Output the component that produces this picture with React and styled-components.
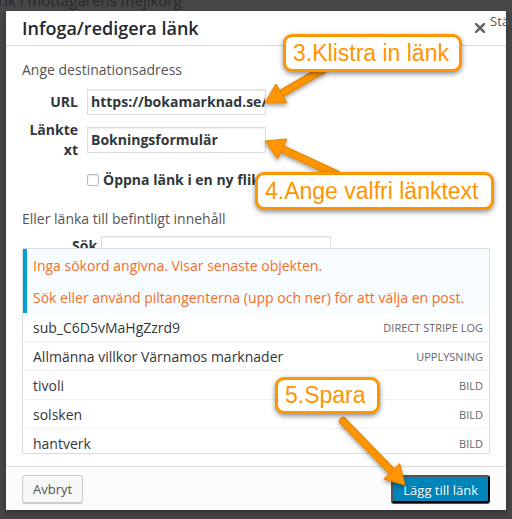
import React from 'react'
import styled, { createGlobalStyle } from 'styled-components'

const ORANGE = '#ff9500'

const GlobalStyle = createGlobalStyle`
  html, body { margin: 0; padding: 0; }
  body { background: #464646; font-family: 'Open Sans', 'DejaVu Sans', sans-serif; }
  * { box-sizing: border-box; }
`

const Page = styled.div`
  position: relative;
  width: 512px;
  height: 519px;
  overflow: hidden;
  background: #464646;
`

const BackdropLine = styled.div`
  margin: -10px 0 0 -2px;
  font-size: 15px;
  line-height: 20px;
  color: #262626;
  white-space: nowrap;
`

const Modal = styled.div`
  position: absolute;
  left: 6px;
  top: 11px;
  width: 500px;
  height: 499px;
  background: #fff;
  display: flex;
  flex-direction: column;
  box-shadow: 0 3px 6px rgba(0, 0, 0, 0.3);
`

const Header = styled.div`
  height: 35px;
  flex: none;
  display: flex;
  align-items: center;
  justify-content: space-between;
  padding: 0 21px 0 16px;
  border-bottom: 1px solid #ddd;
`

const Title = styled.h1`
  margin: 0;
  font-size: 18px;
  font-weight: 600;
  line-height: 24px;
  color: #23282d;
`

const Body = styled.div`
  flex: 1;
  display: flex;
  flex-direction: column;
  padding: 0 16px;
`

const Hint = styled.p`
  margin: ${p => p.$top}px 0 0;
  font-size: 14px;
  line-height: 20px;
  color: #555;
`

const Fields = styled.div`
  margin-top: 9px;
  display: flex;
  flex-direction: column;
  gap: 5px;
`

const FieldRow = styled.div`
  display: flex;
  align-items: center;
`

const Label = styled.label`
  width: 56px;
  margin-right: 9px;
  text-align: right;
  font-size: 14px;
  font-weight: 700;
  line-height: 20px;
  color: #32373c;
`

const TextInput = styled.div`
  width: ${p => p.$w}px;
  height: 26px;
  padding: 0 3px;
  border: 1px solid #ddd;
  box-shadow: inset 0 1px 2px rgba(0, 0, 0, 0.07);
  background: #fff;
  font-size: 14px;
  font-weight: 700;
  line-height: 24px;
  color: #32373c;
  white-space: nowrap;
  overflow: hidden;
`

const CheckRow = styled.label`
  margin-top: 10px;
  padding-left: 65px;
  display: flex;
  align-items: center;
  gap: 4px;
  font-size: 14px;
  font-weight: 700;
  line-height: 20px;
  color: #32373c;
`

const Check = styled.span`
  width: 12px;
  height: 12px;
  border: 1px solid #b4b9be;
  border-radius: 2px;
  background: #fff;
  box-shadow: inset 0 1px 2px rgba(0, 0, 0, 0.1);
`

const SearchClip = styled.div`
  margin-top: 7px;
  height: 12px;
  overflow: hidden;
  display: flex;
  align-items: flex-start;
`

const SearchLabel = styled.label`
  margin-left: 50px;
  width: 18px;
  font-size: 14px;
  font-weight: 700;
  line-height: 20px;
  color: #32373c;
  margin-right: 11px;
`

const Results = styled.div`
  height: 206px;
  border: 1px solid #ddd;
  background: #fff;
  overflow: hidden;
`

const Notice = styled.div`
  border-left: 4px solid #00a0d2;
  background: #f7fcfe;
  padding: 8px 10px 6px 6px;
  display: flex;
  flex-direction: column;
  gap: 14px;
  font-size: 14px;
  line-height: 18px;
  color: #f56e28;

  p { margin: 0; }
`

const Item = styled.div`
  height: 29px;
  flex: none;
  display: flex;
  align-items: center;
  justify-content: space-between;
  padding: 0 6px 0 10px;
  border-bottom: 1px solid #f1f1f1;
  font-size: 14px;
  color: #32373c;
`

const ItemType = styled.span`
  font-size: 11px;
  text-transform: uppercase;
  color: #666;
`

const Footer = styled.div`
  margin-top: auto;
  height: 44px;
  flex: none;
  display: flex;
  align-items: flex-start;
  justify-content: space-between;
  padding: 8px 16px 0;
  border-top: 1px solid #ddd;
  background: #fcfcfc;
`

const Button = styled.button`
  height: 28px;
  padding: 0 10px;
  border-radius: 3px;
  font-family: inherit;
  font-size: 13px;
  line-height: 26px;
  border: 1px solid ${p => (p.$primary ? '#0073aa #006799 #006799' : '#ccc')};
  background: ${p => (p.$primary ? '#0085ba' : '#f7f7f7')};
  color: ${p => (p.$primary ? '#fff' : '#555')};
  box-shadow: 0 1px 0 ${p => (p.$primary ? '#006799' : '#ccc')};
  text-shadow: ${p => (p.$primary ? '0 -1px 1px #006799' : 'none')};
`

const Overlay = styled.svg`
  position: absolute;
  inset: 0;
  pointer-events: none;
`

const Callout = styled.div`
  position: absolute;
  left: ${p => p.$x}px;
  top: ${p => p.$y}px;
  width: ${p => p.$w}px;
  height: ${p => p.$h}px;
  display: flex;
  align-items: center;
  padding: 0 7px;
  border: 3px solid ${ORANGE};
  border-radius: 9px;
  background: #fff;
  box-shadow: 0 2px 5px rgba(0, 0, 0, 0.45);
  font-family: 'Liberation Sans', Arial, sans-serif;
  font-size: 23px;
  color: ${ORANGE};
  white-space: nowrap;
`

const StrayText = styled.span`
  position: absolute;
  left: 490px;
  top: 12px;
  font-size: 13px;
  color: #555;
`

const items = [
  ['sub_C6D5vMaHgZzrd9', 'Direct Stripe Log'],
  ['Allmänna villkor Värnamos marknader', 'Upplysning'],
  ['tivoli', 'Bild'],
  ['solsken', 'Bild'],
  ['hantverk', 'Bild'],
]

const arrows = [
  [[322, 70], [265, 103]],
  [[336, 174], [265, 141]],
  [[343, 421], [405, 485]],
]

function Arrow({ from, to }) {
  const dx = to[0] - from[0]
  const dy = to[1] - from[1]
  const len = Math.hypot(dx, dy)
  const ux = dx / len
  const uy = dy / len
  const bx = to[0] - ux * 19
  const by = to[1] - uy * 19
  const nx = -uy * 11
  const ny = ux * 11
  const head = `${to[0]},${to[1]} ${bx + nx},${by + ny} ${bx - nx},${by - ny}`
  return (
    <g filter="url(#shadow)">
      <line x1={from[0]} y1={from[1]} x2={bx + ux * 2} y2={by + uy * 2} stroke="#e08300" strokeWidth="8" strokeLinecap="round" />
      <line x1={from[0]} y1={from[1]} x2={bx + ux * 2} y2={by + uy * 2} stroke={ORANGE} strokeWidth="6" strokeLinecap="round" />
      <polygon points={head} fill={ORANGE} stroke="#e08300" strokeWidth="1" strokeLinejoin="round" />
    </g>
  )
}

export default function App() {
  return (
    <Page>
      <GlobalStyle />
      <BackdropLine>rik i mottagarens mejlkorg</BackdropLine>
      <Modal>
        <Header>
          <Title>Infoga/redigera länk</Title>
          <svg width="10" height="10" viewBox="0 0 10 10">
            <path d="M1 1 L9 9 M9 1 L1 9" stroke="#666" strokeWidth="2.6" strokeLinecap="square" />
          </svg>
        </Header>
        <Body>
          <Hint $top={14}>Ange destinationsadress</Hint>
          <Fields>
            <FieldRow>
              <Label>URL</Label>
              <TextInput $w={179}>https://bokamarknad.se/</TextInput>
            </FieldRow>
            <FieldRow>
              <Label>Länkte<wbr />xt</Label>
              <TextInput $w={179}>Bokningsformulär</TextInput>
            </FieldRow>
          </Fields>
          <CheckRow>
            <Check />
            Öppna länk i en ny flik
          </CheckRow>
          <Hint $top={19}>Eller länka till befintligt innehåll</Hint>
          <SearchClip>
            <SearchLabel>Sök</SearchLabel>
            <TextInput $w={230} />
          </SearchClip>
          <Results>
            <Notice>
              <p>Inga sökord angivna. Visar senaste objekten.</p>
              <p>Sök eller använd piltangenterna (upp och ner) för att välja en post.</p>
            </Notice>
            {items.map(([name, type]) => (
              <Item key={name}>
                <span>{name}</span>
                <ItemType>{type}</ItemType>
              </Item>
            ))}
          </Results>
        </Body>
        <Footer>
          <Button>Avbryt</Button>
          <Button $primary>Lägg till länk</Button>
        </Footer>
      </Modal>
      <StrayText>Stä</StrayText>
      <Overlay width="512" height="519">
        <defs>
          <filter id="shadow" x="-20%" y="-20%" width="140%" height="140%">
            <feDropShadow dx="0" dy="2" stdDeviation="2" floodColor="#000" floodOpacity="0.4" />
          </filter>
        </defs>
        {arrows.map(([from, to], i) => (
          <Arrow key={i} from={from} to={to} />
        ))}
      </Overlay>
      <Callout $x={283} $y={34} $w={179} $h={38}>3.Klistra in länk</Callout>
      <Callout $x={255} $y={172} $w={239} $h={38}>4.Ange valfri länktext</Callout>
      <Callout $x={275} $y={377} $w={105} $h={37}>5.Spara</Callout>
    </Page>
  )
}
